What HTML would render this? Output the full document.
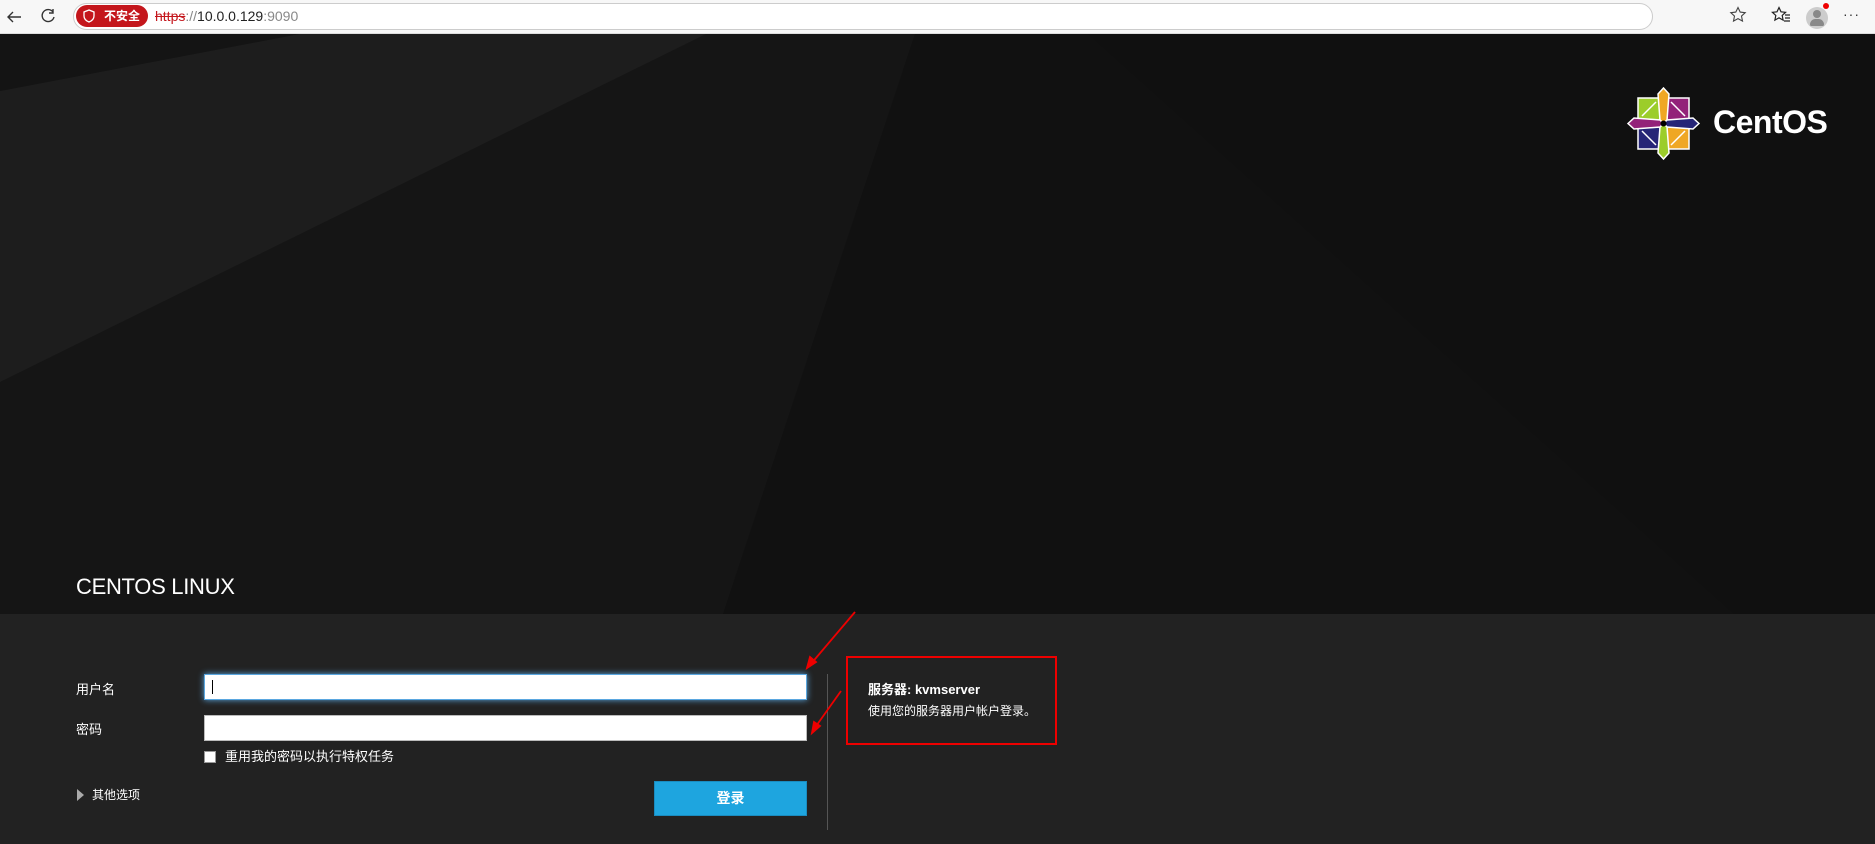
<!DOCTYPE html>
<html><head><meta charset="utf-8"><style>
*{margin:0;padding:0;box-sizing:border-box}
body{width:1875px;height:844px;overflow:hidden;background:#222;font-family:"Liberation Sans","Noto Sans CJK SC",sans-serif;position:relative}
.bar{position:absolute;left:0;top:0;width:1875px;height:34px;background:#f7f7f7;border-bottom:1px solid #ddd}
.abs{position:absolute}
.t{color:#fff;font-size:13px;white-space:nowrap}
input{position:absolute;background:#fff;border:1px solid #bbb}
</style></head><body>
<div class="bar">
<svg class="abs" style="left:5px;top:8px" width="18" height="18" viewBox="0 0 18 18"><path d="M16 9H3M8 4L3 9l5 5" stroke="#333" stroke-width="1.4" fill="none"/></svg>
<svg class="abs" style="left:39px;top:7px" width="18" height="18" viewBox="0 0 18 18"><path d="M14 5A6 6 0 1 0 15 10M14 2v4h-4" stroke="#333" stroke-width="1.4" fill="none"/></svg>
<div class="abs" style="left:73px;top:3px;width:1580px;height:27px;border:1px solid #ccc;border-radius:14px;background:#fff"></div>
<div class="abs" style="left:76px;top:5px;width:72px;height:22px;border-radius:11px;background:#c4161c;color:#fff;font-size:12px;font-weight:bold;line-height:22px;padding-left:28px">不安全</div>
<svg class="abs" style="left:83px;top:9px" width="12" height="14" viewBox="0 0 12 14"><path d="M6 1L1 3v4c0 3 2.5 5 5 6 2.5-1 5-3 5-6V3z" stroke="#fff" fill="none" stroke-width="1.3"/></svg>
<div class="abs" style="left:155px;top:8px;font-size:14px;color:#222"><span style="color:#c4161c;text-decoration:line-through">https</span><span style="color:#888">://</span>10.0.0.129<span style="color:#888">:9090</span></div>
<svg class="abs" style="left:1729px;top:6px" width="18" height="18" viewBox="0 0 18 18"><path d="M9 1.5l2.2 4.6 5 .6-3.7 3.4 1 5L9 12.6 4.5 15.1l1-5L1.8 6.7l5-.6z" stroke="#444" stroke-width="1.1" fill="none"/></svg>
<svg class="abs" style="left:1771px;top:6px" width="20" height="18" viewBox="0 0 20 18"><path d="M8 1.5l2 4.3 4.6.5-3.4 3.2.9 4.6L8 11.8 3.9 14.1l.9-4.6L1.4 6.3 6 5.8z" stroke="#222" stroke-width="1.2" fill="none"/><path d="M14 9h5M14 12h5M13 15h6" stroke="#222" stroke-width="1.2"/></svg>
<div class="abs" style="left:1806px;top:7px;width:22px;height:22px;border-radius:50%;background:#ccc"></div>
<div class="abs" style="left:1813px;top:10px;width:8px;height:8px;border-radius:50%;background:#888"></div>
<div class="abs" style="left:1810px;top:19px;width:14px;height:7px;border-radius:7px 7px 2px 2px;background:#888"></div>
<div class="abs" style="left:1823px;top:3px;width:6px;height:6px;border-radius:50%;background:#e00"></div>
<div class="abs" style="left:1843px;top:6px;font-size:14px;color:#333;letter-spacing:1px">···</div>
</div>
<svg class="abs" style="left:0;top:34px" width="1875" height="580" viewBox="0 34 1875 580">
<rect x="0" y="34" width="1875" height="580" fill="#111"/>
<polygon points="0,34 915,34 723,614 0,614" fill="#151515"/>
<polygon points="0,91 299,34 706,34 0,382" fill="#1d1d1d"/>
<polygon points="0,34 299,34 0,91" fill="#141414"/>
<polygon points="1088,34 1875,34 1875,614 1734,614" fill="#101010"/>
</svg>
<svg class="abs" style="left:1620px;top:80px" width="90" height="90" viewBox="0 0 90 90">
<g stroke="#fff" stroke-width="1.5">
<rect x="18" y="18" width="22" height="22" fill="#9ccd2a"/>
<rect x="47" y="18" width="22" height="22" fill="#932279"/>
<rect x="18" y="47" width="22" height="22" fill="#262577"/>
<rect x="47" y="47" width="22" height="22" fill="#efa724"/>
<polygon points="43.5,8 49,14 47,40 43.5,43.5 40,40 38,14" fill="#efa724"/>
<polygon points="79,43.5 73,49 47,47 43.5,43.5 47,40 73,38" fill="#262577"/>
<polygon points="43.5,79 38,73 40,47 43.5,43.5 47,47 49,73" fill="#9ccd2a"/>
<polygon points="8,43.5 14,38 40,40 43.5,43.5 40,47 14,49" fill="#932279"/>
<path d="M22 36L36 22M51 22l14 14M22 51l14 14M65 51L51 65" fill="none"/>
</g>
<circle cx="43.5" cy="43.5" r="3" fill="#000"/>
</svg>
<div class="abs" style="left:1713px;top:104px;color:#fff;font-size:32px;font-weight:bold;letter-spacing:-0.5px">CentOS</div>
<div class="abs" style="left:76px;top:574px;color:#fff;font-size:22px;letter-spacing:-0.3px">CENTOS LINUX</div>
<div class="abs" style="left:0;top:614px;width:1875px;height:230px;background:#222"></div>
<div class="abs t" style="left:76px;top:679px">用户名</div>
<div class="abs t" style="left:76px;top:719px">密码</div>
<input style="left:204px;top:674px;width:603px;height:26px;border-color:#5aa7e0;box-shadow:0 0 6px #5aa7e0">
<div class="abs" style="left:212px;top:680px;width:1px;height:14px;background:#000"></div>
<input style="left:204px;top:715px;width:603px;height:26px">
<div class="abs" style="left:204px;top:751px;width:12px;height:12px;background:#fff;border:1px solid #999"></div>
<div class="abs t" style="left:225px;top:746px">重用我的密码以执行特权任务</div>
<div class="abs" style="left:77px;top:789px;width:0;height:0;border-left:7px solid #aaa;border-top:6px solid transparent;border-bottom:6px solid transparent"></div>
<div class="abs t" style="left:92px;top:786px;font-size:12px">其他选项</div>
<div class="abs" style="left:654px;top:781px;width:153px;height:35px;background:#1ea5df;border:1px solid #1a8cc0;color:#fff;font-size:14px;font-weight:bold;text-align:center;line-height:33px">登录</div>
<div class="abs" style="left:827px;top:674px;width:1px;height:156px;background:#555"></div>
<div class="abs" style="left:846px;top:656px;width:211px;height:89px;border:2px solid #e00"></div>
<div class="abs t" style="left:868px;top:679px;font-weight:bold">服务器: kvmserver</div>
<div class="abs t" style="left:868px;top:702px;font-size:12px">使用您的服务器用户帐户登录。</div>
<svg class="abs" style="left:0;top:0" width="1875" height="844">
<g stroke="#e00" stroke-width="1.8" fill="#e00">
<line x1="855" y1="612" x2="810" y2="665"/>
<polygon points="807,668 810,657 816,662"/>
<line x1="841" y1="691" x2="814" y2="729"/>
<polygon points="812,733 814,722 820,726"/>
</g></svg>
</body></html>
